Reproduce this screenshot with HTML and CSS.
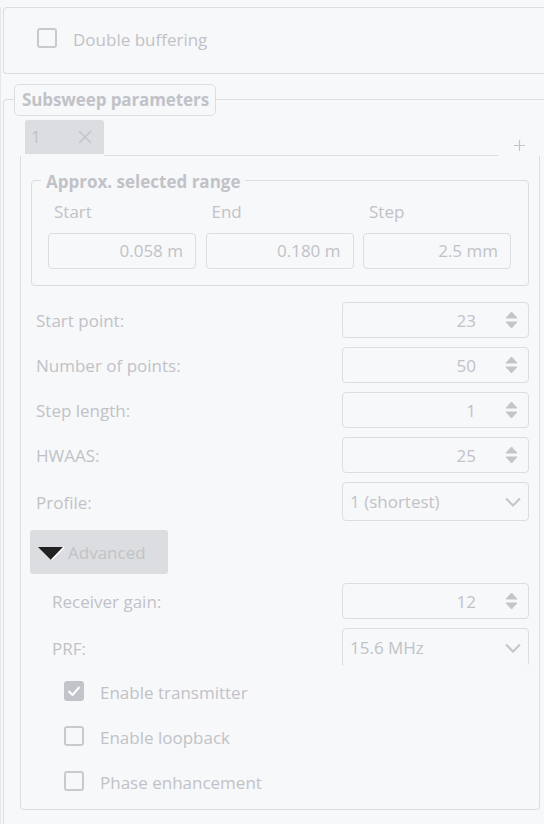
FILE: index.html
```html
<!DOCTYPE html>
<html>
<head>
<meta charset="utf-8">
<link rel="stylesheet" href="styles.css">
</head>
<body>
<div class="page">
  <div class="box1">
    <label class="check"><span class="cb"></span><span>Double buffering</span></label>
  </div>

  <div class="group">
    <div class="group-title">Subsweep parameters</div>
    <div class="tabbar">
      <div class="tab">
        <span class="tab-label">1</span>
        <svg class="tab-close" width="14" height="14" viewBox="0 0 14 14"><path d="M1 1 L13 13 M13 1 L1 13" stroke="#c4c5ca" stroke-width="1.6" fill="none"/></svg>
      </div>
      <div class="tab-line"></div>
      <div class="tab-add">
        <svg width="11" height="11" viewBox="0 0 11 11"><path d="M5.5 0 V11 M0 5.5 H11" stroke="#c4c5ca" stroke-width="1.2" fill="none"/></svg>
      </div>
    </div>

    <div class="pane">
      <div class="range">
        <div class="range-title">Approx. selected range</div>
        <div class="range-grid">
          <div class="range-label">Start</div>
          <div class="range-label">End</div>
          <div class="range-label">Step</div>
          <div class="field">0.058 m</div>
          <div class="field">0.180 m</div>
          <div class="field">2.5 mm</div>
        </div>
      </div>

      <div class="rows">
        <div class="row">
          <span class="row-label">Start point:</span>
          <div class="spin"><span class="spin-val">23</span><span class="arrows"><svg width="13" height="18" viewBox="0 0 13 18"><path d="M6.5 1 L12 7 H1 Z M1 11 H12 L6.5 17 Z" fill="#c4c5ca" stroke="#c4c5ca" stroke-width="1" stroke-linejoin="round"/></svg></span></div>
        </div>
        <div class="row">
          <span class="row-label">Number of points:</span>
          <div class="spin"><span class="spin-val">50</span><span class="arrows"><svg width="13" height="18" viewBox="0 0 13 18"><path d="M6.5 1 L12 7 H1 Z M1 11 H12 L6.5 17 Z" fill="#c4c5ca" stroke="#c4c5ca" stroke-width="1" stroke-linejoin="round"/></svg></span></div>
        </div>
        <div class="row">
          <span class="row-label">Step length:</span>
          <div class="spin"><span class="spin-val">1</span><span class="arrows"><svg width="13" height="18" viewBox="0 0 13 18"><path d="M6.5 1 L12 7 H1 Z M1 11 H12 L6.5 17 Z" fill="#c4c5ca" stroke="#c4c5ca" stroke-width="1" stroke-linejoin="round"/></svg></span></div>
        </div>
        <div class="row">
          <span class="row-label">HWAAS:</span>
          <div class="spin"><span class="spin-val">25</span><span class="arrows"><svg width="13" height="18" viewBox="0 0 13 18"><path d="M6.5 1 L12 7 H1 Z M1 11 H12 L6.5 17 Z" fill="#c4c5ca" stroke="#c4c5ca" stroke-width="1" stroke-linejoin="round"/></svg></span></div>
        </div>
        <div class="row row-combo">
          <span class="row-label">Profile:</span>
          <div class="combo"><span>1 (shortest)</span><svg class="chev" width="16" height="10" viewBox="0 0 16 10"><path d="M1 1.5 L8 8.5 L15 1.5" stroke="#c4c5ca" stroke-width="2" fill="none"/></svg></div>
        </div>
      </div>

      <div class="adv-btn">
        <svg class="adv-tri" width="28" height="15" viewBox="0 0 28 15"><path d="M0 1 H26 L13 14 Z" fill="#222"/><path d="M26 1 L13.5 14" stroke="#fff" stroke-width="1.6"/></svg>
        <span>Advanced</span>
      </div>

      <div class="adv">
        <div class="row">
          <span class="row-label">Receiver gain:</span>
          <div class="spin"><span class="spin-val">12</span><span class="arrows"><svg width="13" height="18" viewBox="0 0 13 18"><path d="M6.5 1 L12 7 H1 Z M1 11 H12 L6.5 17 Z" fill="#c4c5ca" stroke="#c4c5ca" stroke-width="1" stroke-linejoin="round"/></svg></span></div>
        </div>
        <div class="row">
          <span class="row-label">PRF:</span>
          <div class="combo"><span>15.6 MHz</span><svg class="chev" width="16" height="10" viewBox="0 0 16 10"><path d="M1 1.5 L8 8.5 L15 1.5" stroke="#c4c5ca" stroke-width="2" fill="none"/></svg></div>
        </div>
      </div>

      <div class="checks">
        <label class="check"><span class="cb cb-on"><svg width="14" height="12" viewBox="0 0 14 12"><path d="M1.5 6 L5.5 10 L12.5 2" stroke="#fff" stroke-width="2" fill="none"/></svg></span><span>Enable transmitter</span></label>
        <label class="check"><span class="cb"></span><span>Enable loopback</span></label>
        <label class="check"><span class="cb"></span><span>Phase enhancement</span></label>
      </div>
    </div>
  </div>
</div>
</body>
</html>
```

FILE: styles.css
```css
* { box-sizing: border-box; }
html, body {
  margin: 0;
  padding: 0;
  width: 544px;
  height: 824px;
  overflow: hidden;
  background: #f7f8fa;
}
body {
  font-family: "Open Sans", "Noto Sans", sans-serif;
  font-size: 17px;
  color: #c1c2c7;
}
.page {
  height: 824px;
  padding-left: 2px;
  border-left: 1px solid #e6e7e9;
}
.box1 {
  margin-top: 7px;
  height: 67px;
  border: 1px solid #dcdde0;
  border-right: none;
  border-radius: 4px 0 0 4px;
  padding: 20px 0 0 33px;
}
.check {
  display: flex;
  align-items: center;
  gap: 16px;
  height: 20px;
  line-height: 20px;
}
.check > span:last-child { padding-top: 3px; }
.cb {
  width: 20px;
  height: 20px;
  flex: none;
  border: 2px solid #c9cacf;
  border-radius: 3px;
  display: flex;
  align-items: center;
  justify-content: center;
}
.cb-on {
  background: #c3c4c9;
  border-color: #c3c4c9;
}
.group {
  position: relative;
  margin-top: 25px;
  height: 760px;
  border: 1px solid #dcdde0;
  border-bottom: none;
  border-right: none;
  border-radius: 4px 0 0 0;
  padding: 20px 0 0 16px;
}
.group-title {
  position: absolute;
  top: -16px;
  left: 10px;
  height: 32px;
  padding: 0 6px 0 7px;
  border: 1px solid #dcdde0;
  border-radius: 5px;
  background: #f7f8fa;
  font-weight: 700;
  font-size: 17px;
  line-height: 30px;
  letter-spacing: -0.1px;
}
.tabbar {
  display: flex;
  width: 520px;
  height: 36px;
  padding-left: 5px;
}
.tab {
  width: 79px;
  height: 34px;
  background: #dcdde0;
  border-radius: 3px 3px 0 0;
  display: flex;
  align-items: center;
  justify-content: space-between;
  padding: 0 12px 0 6px;
}
.tab-label { line-height: 20px; }
.tab-line {
  flex: 1;
  border-bottom: 1px solid #dcdde0;
}
.tab-add {
  width: 42px;
  display: flex;
  align-items: flex-start;
  justify-content: center;
  padding-top: 20px;
}
.pane {
  width: 520px;
  height: 654px;
  border: 1px solid #dcdde0;
  border-top: none;
  border-radius: 0 0 4px 4px;
  padding: 24px 10px 18px 10px;
}
.range {
  position: relative;
  border: 1px solid #dcdde0;
  border-radius: 4px;
  padding: 20px 17px 16px 16px;
}
.range-title {
  position: absolute;
  top: -10px;
  left: 9px;
  padding: 0 5px;
  background: #f7f8fa;
  font-weight: 700;
  line-height: 22px;
}
.range-grid {
  display: grid;
  grid-template-columns: 148px 148px 148px;
  column-gap: 9.5px;
  row-gap: 10px;
}
.range-label {
  line-height: 22px;
  padding-left: 6px;
}
.field {
  height: 36px;
  border: 1px solid #dcdde0;
  border-radius: 4px;
  text-align: right;
  padding-right: 12px;
  line-height: 34px;
}
.rows {
  margin-top: 16px;
  display: flex;
  flex-direction: column;
  gap: 9px;
}
.row {
  display: flex;
  justify-content: space-between;
  align-items: center;
}
.row-label { padding-left: 5px; padding-top: 1px; }
.spin {
  width: 187px;
  height: 36px;
  border: 1px solid #dcdde0;
  border-radius: 4px;
  display: flex;
  align-items: center;
  justify-content: flex-end;
  padding-right: 10px;
}
.spin-val { margin-right: 29px; }
.arrows { display: flex; }
.combo {
  width: 187px;
  height: 39px;
  border: 1px solid #dcdde0;
  border-radius: 4px;
  display: flex;
  align-items: center;
  justify-content: space-between;
  padding: 0 7px 0 7px;
}
.adv-btn {
  margin-top: 9px;
  margin-left: -1px;
  width: 138px;
  height: 44px;
  background: #dcdde0;
  border-radius: 3px;
  display: flex;
  align-items: center;
  padding-left: 8px;
}
.adv-tri { margin-right: 2px; margin-top: 2px; }
.adv {
  margin-top: 9px;
  height: 82px;
  overflow: hidden;
  display: flex;
  flex-direction: column;
  gap: 9px;
}
.adv .row-label { padding-left: 21px; }
.checks {
  margin-top: 16px;
  padding-left: 33px;
  display: flex;
  flex-direction: column;
  gap: 25px;
}
```
